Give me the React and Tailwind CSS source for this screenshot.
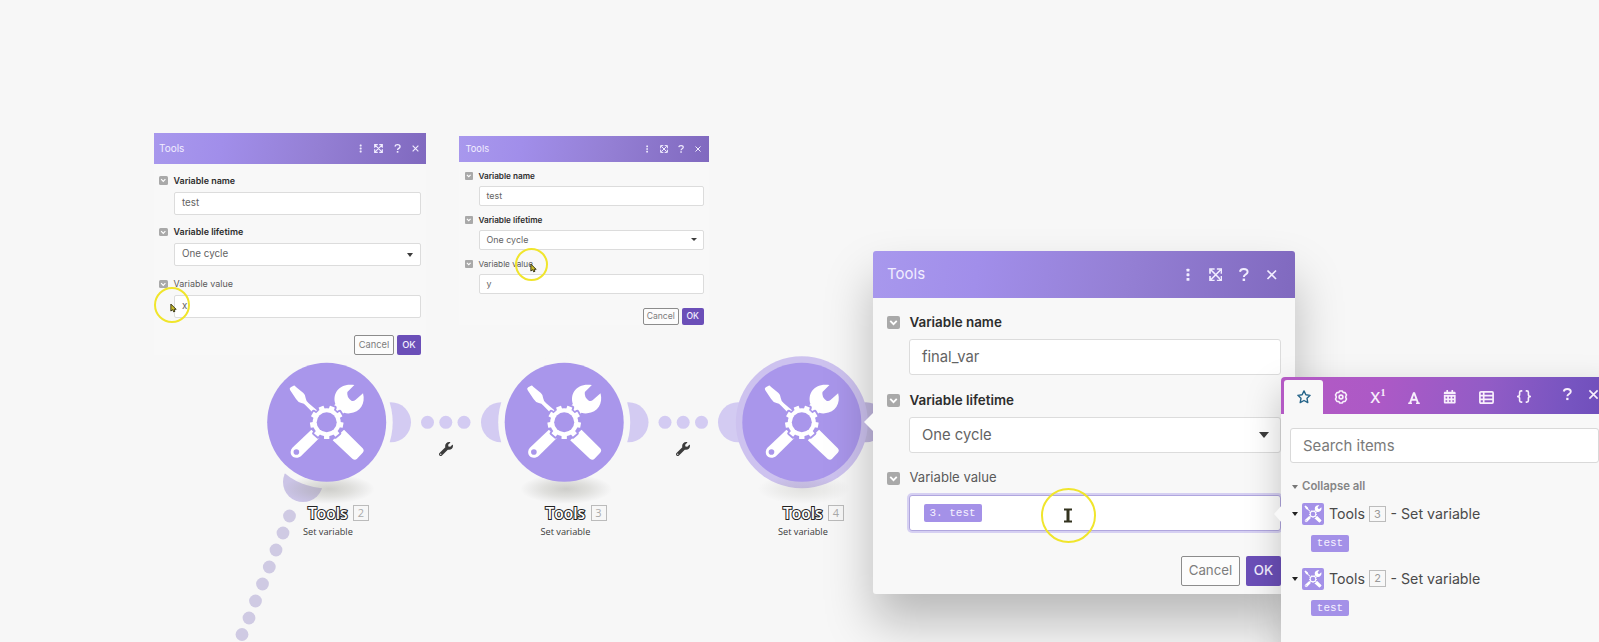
import React from "react";
import { FaWrench, FaCalendarAlt } from "react-icons/fa";

const SIZES = {
  small: {
    box: "left-[459px] top-[136px] w-[250px]",
    head: "h-[25.5px] pl-[6.5px] pr-[7px] text-[9.3px]",
    icons: "gap-[9px]",
    icon: "size-[8px]",
    body: "pt-[7.5px] pl-[6px] pr-[5.5px]",
    label: "h-[14px] mb-[2.5px] text-[8.2px]",
    light: "",
    check: "size-[7.5px] mr-[6px] rounded-[1px]",
    field: "ml-[14px] h-[20.5px] mb-[7px] pl-[6.5px] pr-[6px] text-[8.9px] rounded-[2px]",
    caret: "border-x-[3px] border-t-[3px]",
    foot: "mt-[14px] h-[17px] gap-[3.5px] text-[8.6px]",
    cancel: "w-[35.5px]",
    ok: "w-[21.5px]",
  },
  medium: {
    box: "left-[154px] top-[133px] w-[272px]",
    head: "h-[31px] pl-[5px] pr-[6px] text-[10px]",
    icons: "gap-[9.5px]",
    icon: "size-[9px]",
    body: "pt-[8.5px] pl-[5px] pr-[5px]",
    label: "h-[16px] mb-[3px] text-[8.95px]",
    light: "",
    check: "size-[8.5px] mr-[6px] rounded-[1.5px]",
    field: "ml-[15px] h-[23px] mb-[9.7px] pl-[7px] pr-[7px] text-[9.8px] rounded-[2px]",
    caret: "border-x-[3.5px] border-t-[4px]",
    foot: "mt-[17.5px] h-[19.5px] gap-[3px] text-[9.3px]",
    cancel: "w-[40px]",
    ok: "w-[24px]",
  },
  large: {
    box: "left-[873px] top-[251px] w-[422px] h-[343px] rounded-[3px] shadow-[0_28px_48px_rgba(0,0,0,0.25)]",
    head: "h-[47px] pl-[14px] pr-[17px] text-[15px] rounded-t-[3px]",
    icons: "gap-[14.5px]",
    icon: "size-[13.5px]",
    body: "pt-[12px] pl-[14px] pr-[14px]",
    label: "h-[24px] mb-[5px] text-[13.4px]",
    light: "text-[13.1px]",
    check: "size-[13px] mr-[9.5px] rounded-[2px]",
    field: "ml-[22px] h-[36px] mb-[13px] pl-[12px] pr-[11px] text-[14.8px] rounded-[3px]",
    caret: "border-x-[5px] border-t-[6px]",
    foot: "mt-[25px] h-[30px] gap-[6px] text-[13.300px]",
    cancel: "w-[59px]",
    ok: "w-[35px]",
  },
};

function Dots({ className }) {
  return (
    <svg viewBox="0 0 12 12" className={className} fill="currentColor">
      <rect x="4.9" y="0.6" width="2.6" height="2.6" rx=".6" />
      <rect x="4.9" y="4.7" width="2.6" height="2.6" rx=".6" />
      <rect x="4.9" y="8.8" width="2.6" height="2.6" rx=".6" />
    </svg>
  );
}

function Expand({ className }) {
  return (
    <svg viewBox="0 0 12 12" className={className} fill="none" stroke="currentColor" strokeWidth="1.5">
      <path d="M5 .9H.9V5M7 .9h4.100V5M5 11.100H.9V7M7 11.100h4.100V7M1.800 1.800l8.400 8.400M10.200 1.800l-8.400 8.400" />
    </svg>
  );
}

function Question({ className }) {
  return (
    <svg viewBox="0 0 12 12" className={className} fill="none" stroke="currentColor" strokeWidth="1.8">
      <path d="M2.600 3.300C3 1.600 4.300 .9 6 .9c2 0 3.400 1 3.400 2.600 0 2.200-3.300 2.300-3.300 4.400" />
      <path d="M6.100 9.400v2.200" strokeWidth="2.200" />
    </svg>
  );
}

function Close({ className }) {
  return (
    <svg viewBox="0 0 12 12" className={className} fill="none" stroke="currentColor" strokeWidth="1.5">
      <path d="M2.200 2.200l7.600 7.600M9.800 2.200l-7.600 7.600" />
    </svg>
  );
}

function Label({ s, children, light }) {
  return (
    <div className={`flex items-center ${s.label} ${light ? "font-normal text-[#5a5a5a]" : "font-semibold text-[#2d2d2d]"}`}>
      <span className={`flex items-center justify-center bg-[#a9a9a9] ${s.check}`}>
        <svg viewBox="0 0 12 12" className="size-full" fill="none" stroke="#fff" strokeWidth="1.700">
          <path d="M3 4.500l3 3 3-3" />
        </svg>
      </span>
      <span className={`whitespace-nowrap ${light ? s.light : ""}`}>{children}</span>
    </div>
  );
}

function Field({ s, focus, select, children }) {
  return (
    <div
      className={`flex items-center justify-between border bg-white text-[#636363] ${s.field} ${
        focus ? "border-[#b0a6de] shadow-[0_0_0_2px_#d6d0f2]" : "border-[#dcdcdc]"
      }`}
    >
      {children}
      {select && <span className={`border-x-transparent border-t-[#3c3c3c] ${s.caret}`} />}
    </div>
  );
}

function Dialog({ size, name, value }) {
  const s = SIZES[size];
  return (
    <section className={`absolute bg-[#f8f8f8] ${s.box}`}>
      <header
        className={`flex items-center justify-between bg-[linear-gradient(100deg,#a898ed_0%,#a18eea_25%,#947fd4_60%,#8069bf_100%)] text-[#f1edff] ${s.head}`}
      >
        <span>Tools</span>
        <span className={`flex items-center ${s.icons}`}>
          <Dots className={s.icon} />
          <Expand className={s.icon} />
          <Question className={s.icon} />
          <Close className={s.icon} />
        </span>
      </header>
      <div className={s.body}>
        <Label s={s}>Variable name</Label>
        <Field s={s}>{name}</Field>
        <Label s={s}>Variable lifetime</Label>
        <Field s={s} select>One cycle</Field>
        <Label s={s} light>Variable value</Label>
        <Field s={s} focus={size === "large"}>{value}</Field>
        <div className={`flex justify-end ${s.foot}`}>
          <button className={`flex items-center justify-center rounded-[2px] border border-[#8c8c8c] bg-[#fcfcfc] text-[#7d7d7d] ${s.cancel}`}>
            Cancel
          </button>
          <button className={`flex items-center justify-center rounded-[2px] bg-[#6b4fb8] font-medium text-[#f3efff] ${s.ok}`}>
            OK
          </button>
        </div>
      </div>
    </section>
  );
}

const TEETH = [0, 40, 80, 120, 160, 200, 240, 280, 320];

function ToolsGlyph({ bg }) {
  return (
    <g fill="#fff">
      <path d="M-110 -97Q-113 -101 -108 -105L-101 -109Q-97 -112 -93 -107L-70 -88Q-63 -82 -63 -72Q-62 -63 -54 -57L-24 -32L-35 -22L-62 -50Q-68 -57 -76 -58Q-86 -60 -92 -70Z" />
      <path d="M83 -112L62 -91Q59 -76 74 -65Q80 -62 86 -67L109 -87C117 -57 101 -29 69 -27Q60 -26 52 -29L38 -15L12 -41L26 -55C16 -85 36 -119 83 -112Z" />
      <path d="M-46 22L-22 47L-76 100C-95 117 -119 96 -103 76Z" />
      <circle cx="-91" cy="89" r="8.500" fill={bg} />
      <path d="M52 22L108 78Q114 85 108 91L91 109Q85 115 77 109L18 54Z" />
      <g stroke={bg} strokeWidth="11" strokeLinejoin="round" fill={bg}>
        {TEETH.map((a) => (
          <rect key={a} x="-8" y="-50" width="16" height="16" transform={`rotate(${a + 20})`} />
        ))}
        <circle r="41" />
      </g>
      {TEETH.map((a) => (
        <rect key={a} x="-8" y="-50" width="16" height="16" rx="1" transform={`rotate(${a + 20})`} />
      ))}
      <circle r="42" />
      <circle r="30" fill={bg} />
    </g>
  );
}

const LIGHT = "#d3cbf2";
const CANVAS = "#f7f7f7";

function Scenario() {
  const nodes = [326.7, 564.2, 801.8];
  const trail = [[289.500, 516], [283, 533], [276, 550], [269.300, 567], [262.500, 584], [255.500, 601], [249, 618], [242, 634.500]];
  return (
    <svg className="absolute inset-0" width="1599" height="642" viewBox="0 0 1599 642">
      <defs>
        <radialGradient id="soft">
          <stop offset="0" stopColor="#94948c" stopOpacity=".42" />
          <stop offset=".5" stopColor="#99998f" stopOpacity=".25" />
          <stop offset="1" stopColor="#999" stopOpacity="0" />
        </radialGradient>
      </defs>
      <g fill={LIGHT}>
        <circle cx="391" cy="422.300" r="20" />
        <circle cx="303" cy="482" r="20" fill="#cbc4e6" />
        <circle cx="501" cy="422.300" r="20" />
        <circle cx="628.500" cy="422.300" r="20" />
        <circle cx="738" cy="422.300" r="20" />
        <circle cx="866" cy="422.300" r="20" fill="#c2b8e0" />
        {[427.500, 445.800, 464, 665, 683.200, 701.500].map((x) => (
          <circle key={x} cx={x} cy="422.300" r="6.500" />
        ))}
        {trail.map(([x, y]) => (
          <circle key={y} cx={x} cy={y} r="6.400" fill="#cfcae3" />
        ))}
      </g>
      {nodes.map((x, i) => (
        <g key={x}>
          <circle cx={x} cy="422.300" r="66" fill={i === 2 ? "#cdc2ef" : CANVAS} />
          <ellipse cx={x + 2} cy="489" rx="46" ry="15" fill="url(#soft)" opacity={i === 2 ? 0.5 : 1} />
          <circle cx={x} cy="422.300" r="59.500" fill="#a996eb" />
          <g transform={`translate(${x} 422.300) scale(.3333)`}>
            <ToolsGlyph bg="#a996eb" />
          </g>
        </g>
      ))}
    </svg>
  );
}

function Caption({ place, id }) {
  return (
    <div className={`absolute top-[503px] w-[61px] font-['Open_Sans',sans-serif] ${place}`}>
      <div className="flex h-[20px] items-center justify-between">
        <span className="text-[15.500px] font-semibold leading-[20px] text-white [-webkit-text-stroke:2px_#222] [paint-order:stroke_fill]">Tools</span>
        <span className="flex h-[15.500px] w-[16px] items-center justify-center border border-[#bbb] text-[11px] text-[#aaa]">{id}</span>
      </div>
      <div className="-ml-[5px] mt-[1px] whitespace-nowrap text-[9.200px] leading-[16px] text-[#3a3a3a]">Set variable</div>
    </div>
  );
}

function Pointer({ place }) {
  return (
    <div className={`absolute rounded-full border-2 border-[#f0e52c] ${place}`}>
      <svg viewBox="0 0 8 11" className="ml-auto mr-auto mt-[45%] h-[10px] w-[7px] translate-x-[2px]">
        <path d="M1 1v8l2-1.600 1.300 2.600 1.400-.8L4.600 7H7z" fill="#c9bd2a" stroke="#3a3718" strokeWidth="1.100" />
      </svg>
    </div>
  );
}

function Chip({ children, className }) {
  return (
    <span className={`flex items-center justify-center rounded-[2px] bg-[#a491e8] font-['Liberation_Mono',monospace] text-[#f6f2ff] ${className}`}>
      {children}
    </span>
  );
}

function Group({ id }) {
  return (
    <div className="h-[64.500px]">
      <div className="flex h-[22px] items-center text-[14.200px] text-[#4a4a4a]">
        <span className="mr-[4px] border-x-[3px] border-t-[4px] border-x-transparent border-t-[#222]" />
        <svg viewBox="-165 -165 330 330" className="mr-[5px] size-[22px] rounded-[2px] bg-[#a491e8]">
          <g transform="scale(1.150)">
            <ToolsGlyph bg="#a491e8" />
          </g>
        </svg>
        <span>Tools</span>
        <span className="ml-[4px] mr-[4.500px] flex h-[16.500px] w-[17px] items-center justify-center border border-[#bcbcbc] text-[11px] text-[#999]">{id}</span>
        <span className="whitespace-nowrap">- Set variable</span>
      </div>
      <Chip className="ml-[19px] mt-[10px] h-[16.500px] w-[38px] text-[11px]">test</Chip>
    </div>
  );
}

const CELL = "flex w-[36.500px] items-center justify-center";

function Mapper() {
  return (
    <aside className="absolute left-[1281px] top-[377px] h-[300px] w-[340px] rounded-tl-[4px] bg-[#f8f8f8] shadow-[0_14px_36px_rgba(0,0,0,0.22)]">
      <svg className="absolute -left-[7px] top-[128px]" width="8" height="18" viewBox="0 0 8 18">
        <path d="M8 0v18L0 9z" fill="#f8f8f8" />
      </svg>
      <header className="flex h-[37px] rounded-tl-[4px] bg-[linear-gradient(100deg,#b45ac4_0%,#ac59c6_30%,#925cc6_60%,#7654c0_85%,#6c4bb8_100%)] pl-[3px] pt-[3px] text-[#f8effc]">
        <span className="flex w-[39px] items-center justify-center rounded-t-[3px] bg-[#f8f8f8] text-[#256489]">
          <svg viewBox="0 0 14 14" className="size-[14px]" fill="none" stroke="currentColor" strokeWidth="1.400" strokeLinejoin="round">
            <path d="M7 .9l1.850 3.900 4.250.55-3.100 2.950.8 4.250L7 10.500l-3.800 2.050.8-4.250L.9 5.350l4.250-.55z" />
          </svg>
        </span>
        <span className={CELL}>
          <svg viewBox="0 0 14 14" className="size-[14px]" fill="none" stroke="currentColor" strokeWidth="1.600" strokeLinejoin="round">
            <path d="M5.600 1h2.800l.7 1.500 2 .1 1.400 2.300L11.600 7l.9 2.100-1.400 2.300-2 .1-.7 1.500H5.600l-.7-1.500-2-.1-1.400-2.300L2.400 7l-.9-2.100 1.400-2.300 2-.1z" />
            <circle cx="7" cy="7" r="1.900" />
          </svg>
        </span>
        <span className={CELL}>
          <span className="text-[15px] font-medium leading-none">X</span>
          <span className="-mt-[8px] font-['Liberation_Serif',serif] text-[10px] font-bold leading-none">1</span>
        </span>
        <span className={`${CELL} pt-[1px]`}>
          <svg viewBox="0 0 12 12" className="size-[12px]" fill="none" stroke="currentColor" strokeWidth="1.900">
            <path d="M2 11L5.700 1.200h.6L10 11M3.500 7.800h5" />
            <path d="M.2 11.200h3.800M8 11.200h3.800" strokeWidth="1.500" />
          </svg>
        </span>
        <span className={`${CELL} -ml-[1px]`}>
          <FaCalendarAlt className="size-[13.500px]" />
        </span>
        <span className={CELL}>
          <svg viewBox="0 0 15 13" className="h-[13px] w-[15px]" fill="none" stroke="currentColor" strokeWidth="1.700">
            <rect x=".9" y=".9" width="13.200" height="11.200" rx="1" />
            <path d="M1 4.600h13M1 8.400h13M4.700 1v11" />
          </svg>
        </span>
        <span className={`${CELL} -mt-[2px] ml-[1px]`}>
          <svg viewBox="0 0 16 13" className="h-[13px] w-[16px]" fill="none" stroke="currentColor" strokeWidth="1.600">
            <path d="M6.300 .9H5.200Q3.600 .9 3.600 2.500V4.800Q3.600 6.500 1 6.500Q3.600 6.500 3.600 8.200V10.500Q3.600 12.100 5.200 12.100H6.300M9.700 .9h1.100Q12.400 .9 12.400 2.500V4.800Q12.400 6.500 15 6.500Q12.400 6.500 12.400 8.200V10.500Q12.400 12.100 10.800 12.100H9.700" />
          </svg>
        </span>
        <span className="-mt-[5px] flex w-[50px] items-center justify-center">
          <Question className="size-[12.500px]" />
        </span>
        <span className="-mt-[5px] -ml-[5px] flex items-center">
          <Close className="size-[13px]" />
        </span>
      </header>
      <div className="pl-[9px] pt-[14px]">
        <div className="flex h-[35px] w-[309px] items-center rounded-[3px] border border-[#d9d9d9] bg-white pl-[12px] pt-[1px] text-[14.900px] text-[#7a7a7a]">
          Search items
        </div>
        <div className="mb-[8px] ml-[2px] mt-[15px] flex h-[17px] items-center text-[11.400px] font-semibold text-[#858585]">
          <span className="mr-[4px] border-x-[3px] border-t-[4px] border-x-transparent border-t-[#777]" />
          Collapse all
        </div>
        <div className="ml-[2px]">
          <Group id="3" />
          <Group id="2" />
        </div>
      </div>
    </aside>
  );
}

export default function App() {
  return (
    <main className="relative h-[642px] w-[1599px] overflow-hidden bg-[#f7f7f7] font-['Inter',sans-serif]">
      <Scenario />
      <FaWrench className="absolute left-[439px] top-[442px] size-[14px] text-[#3c3c3c]" />
      <FaWrench className="absolute left-[676px] top-[442px] size-[14px] text-[#3c3c3c]" />
      <Caption place="left-[308px]" id="2" />
      <Caption place="left-[545.500px]" id="3" />
      <Caption place="left-[783px]" id="4" />
      <Dialog size="medium" name="test" value="x" />
      <Dialog size="small" name="test" value="y" />
      <Dialog
        size="large"
        name="final_var"
        value={<Chip className="ml-[1.500px] h-[18px] w-[58px] text-[11px]">3. test</Chip>}
      />
      <svg className="absolute left-[864px] top-[412px]" width="10" height="20" viewBox="0 0 10 20">
        <path d="M10 0v20L0 10z" fill="#f8f8f8" />
      </svg>
      <Mapper />
      <Pointer place="left-[153.500px] top-[287px] size-[36px]" />
      <Pointer place="left-[515px] top-[248px] size-[33px]" />
      <div className="absolute left-[1041px] top-[488px] flex size-[55px] items-center justify-center rounded-full border-2 border-[#f0e52c]">
        <svg viewBox="0 0 10 15" className="h-[15px] w-[10px] -translate-x-px" fill="none" stroke="#33331f">
          <path d="M1 1.500h8M1 13.500h8" strokeWidth="2" />
          <path d="M5 2v11" strokeWidth="3" />
        </svg>
      </div>
    </main>
  );
}
